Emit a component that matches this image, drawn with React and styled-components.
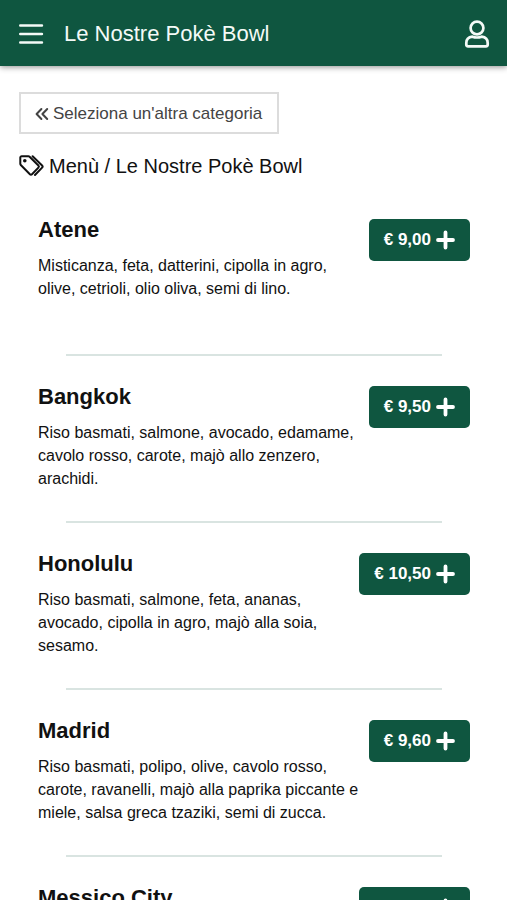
import styled, { createGlobalStyle } from 'styled-components';

const GREEN = '#0f5640';

const GlobalStyle = createGlobalStyle`
  * {
    box-sizing: border-box;
  }

  body {
    margin: 0;
    background-color: #fff;
    color: #111;
    font-family: "Liberation Sans", Arial, sans-serif;
  }

  button {
    font-family: inherit;
    cursor: pointer;
  }
`;

const Header = styled.header`
  position: sticky;
  top: 0;
  z-index: 10;
  display: flex;
  align-items: center;
  gap: 20px;
  height: 66px;
  padding: 2px 17px 0 18px;
  background-color: ${GREEN};
  color: #f4faf7;
  box-shadow: 0 1px 6px rgba(0, 0, 0, 0.45);
`;

const HeaderTitle = styled.h1`
  flex: 1;
  margin: 0;
  font-size: 22px;
  line-height: 28px;
  font-weight: normal;
`;

const IconButton = styled.button`
  display: flex;
  padding: 0;
  border: none;
  background: none;
  color: inherit;
`;

const Main = styled.main`
  padding: 26px 18px 0 19px;
`;

const BackButton = styled.button`
  display: flex;
  align-items: center;
  gap: 4px;
  height: 42px;
  padding: 2px 15px 0 14px;
  border: 2px solid #dcdcdc;
  background-color: #fff;
  color: #444;
  font-size: 17px;
`;

const Breadcrumb = styled.nav`
  display: flex;
  align-items: center;
  gap: 5px;
  margin-top: 20px;
  font-size: 20px;
  line-height: 24px;
`;

const BreadcrumbLink = styled.a`
  color: inherit;
  text-decoration: none;
`;

const MenuList = styled.ul`
  margin: 22px 0 0;
  padding: 0;
  list-style: none;
`;

const MenuItem = styled.li`
  height: 167px;
  padding: 19px 19px 0;
`;

const ItemBody = styled.div`
  display: flex;
  justify-content: space-between;
  align-items: flex-start;
  height: 135px;
`;

const ItemText = styled.div`
  width: 75%;
`;

const ItemTitle = styled.h2`
  margin: 0;
  font-size: 22px;
  line-height: 22px;
`;

const ItemDescription = styled.p`
  margin: 13px 0 0;
  font-size: 16px;
  line-height: 23px;
`;

const PriceButton = styled.button`
  display: flex;
  flex-shrink: 0;
  align-items: center;
  gap: 4px;
  height: 42px;
  padding: 0 14px 0 15px;
  border: none;
  border-radius: 5px;
  background-color: ${GREEN};
  color: #fff;
  font-size: 17px;
  font-weight: bold;
`;

const Divider = styled.hr`
  height: 2px;
  margin: 0 28px;
  border: none;
  background-color: #d9e4e1;
`;

const MenuIcon = () => (
  <svg width="26" height="22" viewBox="0 0 26 22" stroke="currentColor" strokeWidth="2.6" strokeLinecap="round">
    <path d="M2.3 2.5h21.6M2.3 11h21.6M2.3 19.5h21.6" />
  </svg>
);

const UserIcon = () => (
  <svg width="26" height="28" viewBox="0 0 26 28" fill="none" stroke="currentColor" strokeWidth="2.7" strokeLinejoin="round">
    <circle cx="13" cy="8" r="6.4" />
    <path d="M8.4 16.7C4.6 17.2 2.3 19.8 2.3 23v1.6c0 1.1.7 1.8 1.8 1.8h17.8c1.1 0 1.8-.7 1.8-1.8V23c0-3.2-2.3-5.8-6.1-6.3-1.4.5-2.9.8-4.600.8s-3.2-.3-4.600-.8z" />
  </svg>
);

const BackIcon = () => (
  <svg width="14" height="14" viewBox="0 0 14 14" fill="none" stroke="currentColor" strokeWidth="2" strokeLinecap="round" strokeLinejoin="round">
    <path d="M6.4 2L1.600 7l4.800 5M12.2 2L7.4 7l4.800 5" />
  </svg>
);

const TagsIcon = () => (
  <svg width="25" height="22" viewBox="0 0 25 22" fill="none" stroke="currentColor" strokeWidth="2" strokeLinecap="round" strokeLinejoin="round">
    <path d="M1.3 2.6v6.2c0 .5.2.9.5 1.2l9.1 9.2c.6.6 1.5.6 2.1 0l6.4-6.6c.6-.6.6-1.5 0-2.1L10.6 1.7c-.3-.3-.7-.5-1.200-.5H2.7c-.8 0-1.400.6-1.400 1.400z" />
    <path d="M13.6 1.200l9.5 9.300c.6.6.6 1.500 0 2.100L16 20" />
    <circle cx="5.800" cy="5.700" r="1.800" fill="currentColor" stroke="none" />
  </svg>
);

const PlusIcon = () => (
  <svg width="21" height="20" viewBox="0 0 21 20" stroke="currentColor" strokeWidth="3.8" strokeLinecap="round">
    <path d="M10.5 2.500v15M3 10h15" />
  </svg>
);

const items = [
  { name: 'Atene', price: '9,00', description: 'Misticanza, feta, datterini, cipolla in agro, olive, cetrioli, olio oliva, semi di lino.' },
  { name: 'Bangkok', price: '9,50', description: 'Riso basmati, salmone, avocado, edamame, cavolo rosso, carote, majò allo zenzero, arachidi.' },
  { name: 'Honolulu', price: '10,50', description: 'Riso basmati, salmone, feta, ananas, avocado, cipolla in agro, majò alla soia, sesamo.' },
  { name: 'Madrid', price: '9,60', description: 'Riso basmati, polipo, olive, cavolo rosso, carote, ravanelli, majò alla paprika piccante e miele, salsa greca tzaziki, semi di zucca.' },
  { name: 'Messico City', price: '10,50' },
];

const App = () => (
  <>
    <GlobalStyle />
    <Header>
      <IconButton aria-label="Menù">
        <MenuIcon />
      </IconButton>
      <HeaderTitle>Le Nostre Pokè Bowl</HeaderTitle>
      <IconButton aria-label="Profilo">
        <UserIcon />
      </IconButton>
    </Header>
    <Main>
      <BackButton>
        <BackIcon />
        Seleziona un'altra categoria
      </BackButton>
      <Breadcrumb>
        <TagsIcon />
        <span>
          <BreadcrumbLink href="#menu">Menù</BreadcrumbLink> / Le Nostre Pokè Bowl
        </span>
      </Breadcrumb>
      <MenuList>
        {items.map(({ name, price, description }) => (
          <MenuItem key={name}>
            <ItemBody>
              <ItemText>
                <ItemTitle>{name}</ItemTitle>
                {description && <ItemDescription>{description}</ItemDescription>}
              </ItemText>
              <PriceButton>
                € {price}
                <PlusIcon />
              </PriceButton>
            </ItemBody>
            <Divider />
          </MenuItem>
        ))}
      </MenuList>
    </Main>
  </>
);

export default App;
